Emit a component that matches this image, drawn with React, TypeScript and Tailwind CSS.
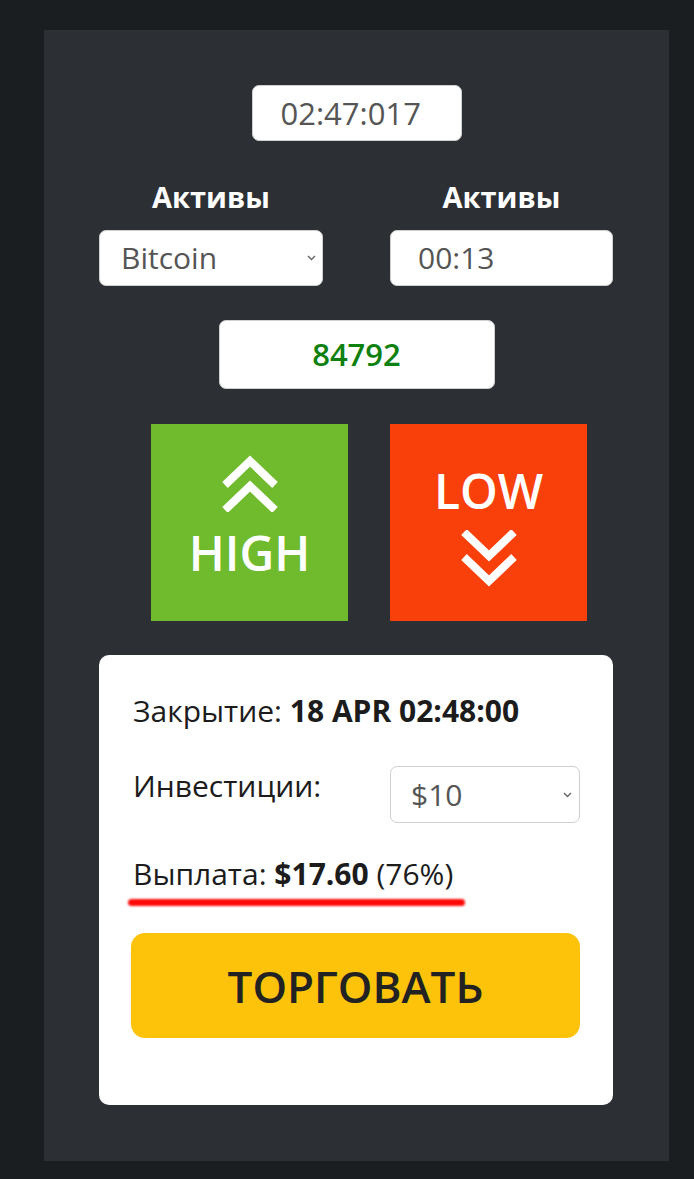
import React from "react";

function Chevrons({ down }: { down?: boolean }) {
  return (
    <svg width="58" height="57" viewBox="0 0 58 57" style={{ transform: down ? "scaleY(-1)" : undefined }}>
      <polyline points="4,30 29,6 54,30" fill="none" stroke="white" strokeWidth="8" />
      <polyline points="4,55 29,31 54,55" fill="none" stroke="white" strokeWidth="8" />
    </svg>
  );
}

function Caret() {
  return (
    <svg width="9" height="6" viewBox="0 0 9 6" className="shrink-0">
      <polyline points="1,1 4.5,4.5 8,1" fill="none" stroke="#666" strokeWidth="1.4" />
    </svg>
  );
}

export default function App() {
  return (
    <div
      className="min-h-[1179px] w-[694px] bg-[#1b1e21] pt-[30px] pl-[44px]"
      style={{ fontFamily: "'Open Sans', 'Noto Sans', sans-serif" }}
    >
      <div className="w-[625px] h-[1131px] bg-[#2c3034] flex flex-col pt-[55px]">
        {/* timer */}
        <div className="self-center w-[210px] h-[56px] bg-white rounded-[7px] border border-[#cfcfcf] flex items-center pl-[28px] text-[31px] text-[#555] leading-none">
          02:47:017
        </div>

        {/* labels + inputs */}
        <div className="grid grid-cols-[224px_223px] gap-x-[67px] pl-[55px] mt-[38px]">
          <div className="text-center text-white font-bold text-[29px] leading-[36px]">Активы</div>
          <div className="text-center text-white font-bold text-[29px] leading-[36px]">Активы</div>
          <div className="mt-[15px] h-[56px] bg-white rounded-[7px] border border-[#cfcfcf] flex items-center justify-between pl-[21px] pr-[6px] text-[30px] text-[#555] leading-none">
            <span>Bitcoin</span>
            <Caret />
          </div>
          <div className="mt-[15px] h-[56px] bg-white rounded-[7px] border border-[#cfcfcf] flex items-center pl-[27px] text-[30px] text-[#555] leading-none">
            00:13
          </div>
        </div>

        {/* price */}
        <div className="self-center mt-[34px] w-[276px] h-[69px] bg-white rounded-[7px] border border-[#cfcfcf] flex items-center justify-center text-[31px] font-semibold text-[#0e800e] leading-none">
          84792
        </div>

        {/* high / low */}
        <div className="flex gap-[42px] pl-[107px] mt-[35px]">
          <div className="w-[197px] h-[197px] bg-[#6fba2d] flex flex-col items-center pt-[31px]">
            <Chevrons />
            <div className="mt-[17px] text-white font-semibold text-[48px] leading-none">HIGH</div>
          </div>
          <div className="w-[197px] h-[197px] bg-[#f9400a] flex flex-col items-center pt-[43px]">
            <div className="text-white font-semibold text-[48px] leading-none">LOW</div>
            <div className="mt-[15px]">
              <Chevrons down />
            </div>
          </div>
        </div>

        {/* card */}
        <div className="ml-[55px] mt-[34px] w-[514px] h-[450px] bg-white rounded-[10px] pt-[36px] pl-[34px] pr-[33px] text-[#1c1c1c]">
          <div className="text-[30px] leading-[40px] whitespace-nowrap">
            Закрытие: <span className="font-bold">18 APR 02:48:00</span>
          </div>
          <div className="mt-[35px] flex items-start justify-between">
            <div className="text-[30px] leading-[40px]">Инвестиции:</div>
            <div className="w-[190px] h-[57px] rounded-[7px] border border-[#cfcfcf] flex items-center justify-between pl-[20px] pr-[7px] text-[30px] text-[#555] leading-none">
              <span>$10</span>
              <Caret />
            </div>
          </div>
          <div className="mt-[31px] text-[30px] leading-[40px] whitespace-nowrap">
            Выплата: <span className="font-bold">$17.60</span> (76%)
          </div>
          <div className="-ml-[5px] mt-[5px] w-[337px] h-[7px] rounded-full bg-[#ff0a0a] blur-[0.8px]" />
          <div className="mt-[27px] -ml-[2px] w-[449px] h-[105px] rounded-[14px] bg-[#fdc20a] flex items-center justify-center text-[44px] font-semibold text-[#222] leading-none">
            ТОРГОВАТЬ
          </div>
        </div>
      </div>
    </div>
  );
}
